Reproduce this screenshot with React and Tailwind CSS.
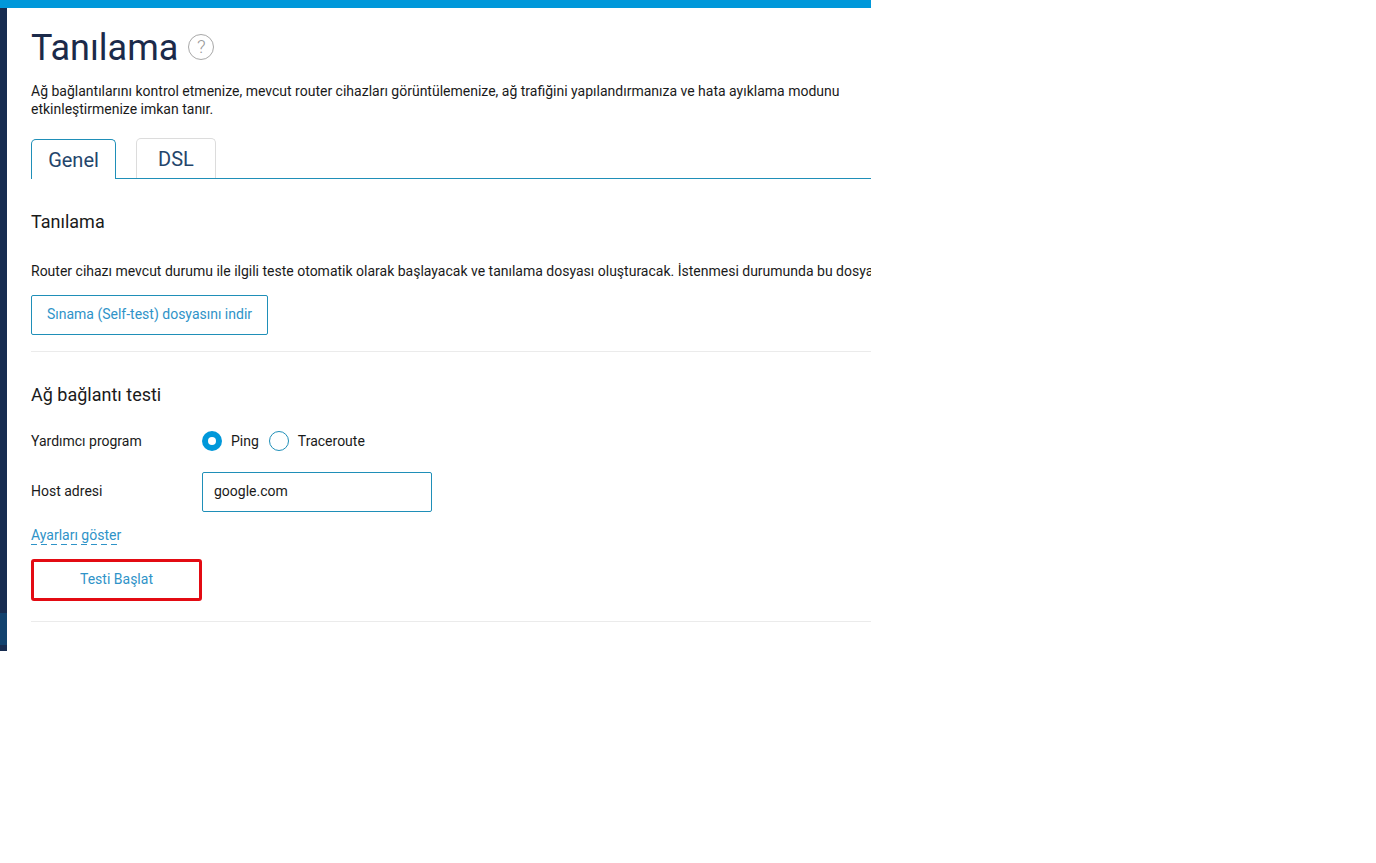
import React from 'react'

const font = { fontFamily: 'Roboto, sans-serif' }

const App = () => {
  return (
    <div className="w-[1376px] h-[863px] bg-white" style={font}>
      <div className="w-[871px] h-[651px] overflow-hidden flex flex-col">
        <div className="h-2 bg-[#0098da] flex-shrink-0" />

        <div className="flex flex-1 min-h-0">
          {/* Left nav edge */}
          <div className="w-[7px] flex-shrink-0 flex flex-col bg-[#172c50]">
            <div className="h-[605px]" />
            <div className="h-8 bg-[#12426e]" />
          </div>

          <div className="flex-1 min-w-0 pl-6 pt-[19px]">
            {/* Title */}
            <div className="flex items-center h-[42px]">
              <h1 className="text-[36px] leading-[42px] text-[#1b2a4a] font-normal">Tanılama</h1>
              <div className="ml-[10px] -mt-[2px] w-[26px] h-[26px] rounded-full border border-[#a8a8a8] text-[#999999] text-[19px] font-light flex items-center justify-center">?</div>
            </div>

            <p className="mt-[13px] w-[830px] text-[14px] leading-[18px] text-[#1a1a1a]">
              Ağ bağlantılarını kontrol etmenize, mevcut router cihazları görüntülemenize, ağ trafiğini yapılandırmanıza ve hata ayıklama modunu etkinleştirmenize imkan tanır.
            </p>

            {/* Tabs */}
            <div className="mt-[20px] flex items-end h-[41px] border-b border-[#1f8fb8]">
              <div className="w-[85px] h-10 -mb-px bg-white border border-b-0 border-[#1f8fb8] rounded-t-[5px] flex items-center justify-center text-[20px] text-[#24456b]">Genel</div>
              <div className="ml-5 w-[80px] h-10 pt-[1px] bg-white border border-b-0 border-[#dcdcdc] rounded-t-[5px] flex items-center justify-center text-[20px] text-[#24456b]">DSL</div>
            </div>

            {/* Diagnostics section */}
            <h2 className="mt-[31px] text-[18px] leading-[24px] text-[#1a1a1a] font-normal">Tanılama</h2>
            <p className="mt-[28px] text-[14px] leading-[19px] text-[#1a1a1a] whitespace-nowrap">
              Router cihazı mevcut durumu ile ilgili teste otomatik olarak başlayacak ve tanılama dosyası oluşturacak. İstenmesi durumunda bu dosya
            </p>
            <button className="mt-[14px] w-[237px] h-10 pb-px border border-[#1f8fb8] rounded-[2px] text-[14px] text-[#2f93c8] flex items-center justify-center">
              Sınama (Self-test) dosyasını indir
            </button>
            <div className="mt-4 border-t border-[#ebebeb]" />

            {/* Connection test section */}
            <h2 className="mt-[31px] text-[18px] leading-[24px] text-[#1a1a1a] font-normal">Ağ bağlantı testi</h2>

            <div className="mt-[23px] flex items-center h-[22px] text-[14px] text-[#1a1a1a]">
              <span className="w-[171px]">Yardımcı program</span>
              <span className="w-5 h-5 rounded-full bg-[#0098da] flex items-center justify-center">
                <span className="w-2 h-2 rounded-full bg-white" />
              </span>
              <span className="ml-[9px]">Ping</span>
              <span className="ml-[10px] w-5 h-5 rounded-full border border-[#1f8fb8] bg-white" />
              <span className="ml-[9px]">Traceroute</span>
            </div>

            <div className="mt-[20px] flex items-center text-[14px] text-[#1a1a1a]">
              <span className="w-[171px] pb-[2px]">Host adresi</span>
              <div className="w-[230px] h-10 pb-[2px] border border-[#1f8fb8] rounded-[2px] pl-[11px] flex items-center">google.com</div>
            </div>

            {/* Dashed link */}
            <div className="mt-[13px] h-5 text-[14px] leading-[20px] text-[#2f93c8]">
              <span>Ayarları göster</span>
              <div className="-mt-[1px] w-[87px] h-px bg-[repeating-linear-gradient(90deg,#2f93c8_0_6px,transparent_6px_10px)]" />
            </div>

            <button className="mt-[14px] w-[171px] h-[42px] pb-[2px] border-[3px] border-[#e30b13] rounded-[3px] text-[14px] text-[#2f93c8] flex items-center justify-center">
              Testi Başlat
            </button>
            <div className="mt-5 border-t border-[#ebebeb]" />
          </div>
        </div>
      </div>
    </div>
  )
}

export default App
